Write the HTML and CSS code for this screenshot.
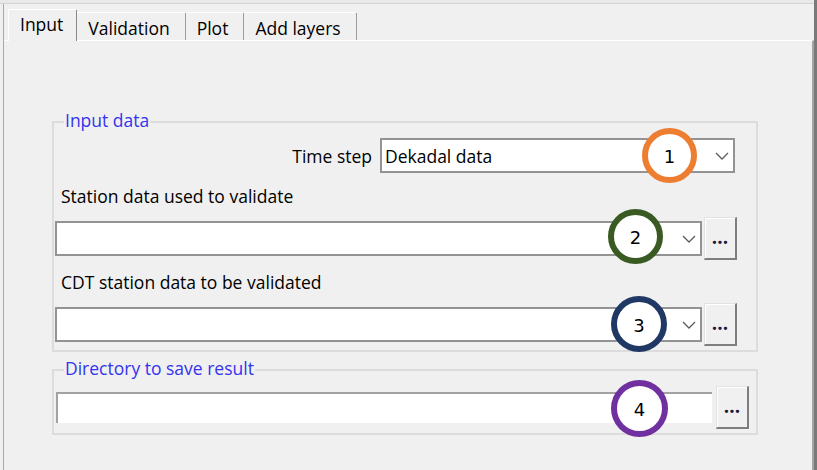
FILE: index.html
```html
<!DOCTYPE html>
<html lang="en">
<head>
<meta charset="utf-8">
<title>Validation - Input</title>
<link rel="stylesheet" href="styles.css">
</head>
<body>
<div class="window">
  <div class="topstrip"></div>
  <div class="tabcontrol">
    <div class="tabstrip">
      <div class="tab active">Input</div>
      <div class="tab">Validation</div>
      <div class="tab">Plot</div>
      <div class="tab">Add layers</div>
    </div>
    <div class="panel">
      <section class="group group-input">
        <div class="legend">Input data</div>
        <div class="row row-timestep">
          <span class="label">Time step</span>
          <div class="combo combo-timestep">
            <span class="combo-value">Dekadal data</span>
            <svg class="chevron" width="14" height="8" viewBox="0 0 14 8"><polyline points="1,1 7,7 13,1" fill="none" stroke="#5c5c5c" stroke-width="1.3"/></svg>
          </div>
        </div>
        <div class="field-label">Station data used to validate</div>
        <div class="row row-picker">
          <div class="combo combo-wide">
            <svg class="chevron" width="14" height="8" viewBox="0 0 14 8"><polyline points="1,1 7,7 13,1" fill="none" stroke="#5c5c5c" stroke-width="1.3"/></svg>
          </div>
          <button class="browse">...</button>
        </div>
        <div class="field-label label-cdt">CDT station data to be validated</div>
        <div class="row row-picker">
          <div class="combo combo-wide">
            <svg class="chevron" width="14" height="8" viewBox="0 0 14 8"><polyline points="1,1 7,7 13,1" fill="none" stroke="#5c5c5c" stroke-width="1.3"/></svg>
          </div>
          <button class="browse">...</button>
        </div>
      </section>
      <section class="group group-dir">
        <div class="legend">Directory to save result</div>
        <div class="row row-dir">
          <div class="textfield"></div>
          <button class="browse">...</button>
        </div>
      </section>
    </div>
  </div>
  <div class="marker marker-1">1</div>
  <div class="marker marker-2">2</div>
  <div class="marker marker-3">3</div>
  <div class="marker marker-4">4</div>
</div>
</body>
</html>
```
FILE: styles.css
```css
* { box-sizing: border-box; }

body {
  margin: 0;
  background: #f0f0f0;
  font-family: "Open Sans", "Noto Sans", sans-serif;
  font-size: 17.5px;
  font-weight: 500;
  color: #000;
}

.window {
  position: relative;
  width: 817px;
  height: 470px;
  overflow: hidden;
  display: flex;
  flex-direction: column;
  border-right: 3px solid #7a7a7a;
}

.topstrip {
  height: 4px;
  background: #e9e9e9;
  border-bottom: 1px solid #d4d4d4;
}

.tabcontrol {
  flex: 1;
  display: flex;
  flex-direction: column;
  margin-left: 3px;
  border-left: 1px solid #a8a8a8;
}

.tabstrip {
  height: 36px;
  display: flex;
  align-items: flex-end;
  padding-left: 4px;
}

.tab {
  height: 28px;
  padding: 2px 15px 0 11px;
  line-height: 26px;
  border-top: 1px solid #fff;
  border-right: 1px solid #9c9c9c;
  border-top-right-radius: 2px;
  white-space: nowrap;
}

.tab.active {
  position: relative;
  z-index: 1;
  height: 32px;
  margin-bottom: -1px;
  padding: 1px 13px 0 11px;
  border-left: 1px solid #fff;
  border-right: 1px solid #888;
  background: #f0f0f0;
}

.panel {
  flex: 1;
  border-top: 1px solid #fff;
  border-right: 2px solid #a4a4a4;
  padding: 80px 54px 0 48px;
}

.group {
  border: 2px solid #dcdcdc;
}

.group-input {
  padding-bottom: 4px;
}

.group-dir {
  margin-top: 17px;
  padding-bottom: 4px;
}

.legend {
  width: max-content;
  margin: -14px 0 0 10px;
  padding: 0 1px;
  line-height: 22px;
  background: #f0f0f0;
  color: #3434ee;
}

.row {
  display: flex;
  align-items: center;
}

.row-timestep {
  justify-content: flex-end;
  gap: 8px;
  margin-top: 7px;
  padding-right: 21px;
}

.label {
  line-height: 22px;
}

.field-label {
  margin-top: 12px;
  padding-left: 7px;
  line-height: 22px;
}

.label-cdt {
  margin-top: 11px;
}

.row-picker {
  margin-top: 10px;
  gap: 2px;
  padding: 0 19px 0 1px;
}

.combo {
  display: flex;
  align-items: center;
  height: 35px;
  padding: 0 4px 0 3px;
  background: #fff;
  border: 2px solid #939393;
  line-height: 22px;
}

.combo-timestep {
  width: 355px;
}

.combo-wide {
  flex: 1;
}

.chevron {
  margin-left: auto;
  flex: none;
}

.browse {
  width: 33px;
  height: 43px;
  padding: 0 0 2px;
  font-family: inherit;
  font-size: 19px;
  font-weight: 700;
  color: #1a1a3a;
  background: #f0f0f0;
  border-style: solid;
  border-width: 1px 2px 2px 1px;
  border-color: #e2e2e2 #7e7e7e #7e7e7e #e2e2e2;
  box-shadow: inset 1px 1px 0 #fff;
  line-height: 22px;
}

.row-dir {
  margin-top: 7px;
  gap: 4px;
  padding: 0 7px 0 2px;
}

.textfield {
  flex: 1;
  height: 31px;
  background: #fff;
  border-top: 2px solid #a2a2a2;
  border-left: 2px solid #a2a2a2;
}

.marker {
  position: absolute;
  display: flex;
  align-items: center;
  justify-content: center;
  width: 55px;
  height: 55px;
  padding-top: 2px;
  border: 6px solid;
  border-radius: 50%;
  background: #fff;
  font-family: "DejaVu Sans", sans-serif;
  font-size: 18px;
  font-weight: 400;
  color: #000;
}

.marker-1 { left: 642px; top: 128px; border-color: #ed7d31; }
.marker-2 { left: 608px; top: 209px; border-color: #3a5a24; }
.marker-3 { left: 611px; top: 296px; width: 56px; height: 56px; border-color: #1f3864; }
.marker-4 { left: 611px; top: 380px; width: 57px; height: 57px; border-color: #7030a0; }
```
